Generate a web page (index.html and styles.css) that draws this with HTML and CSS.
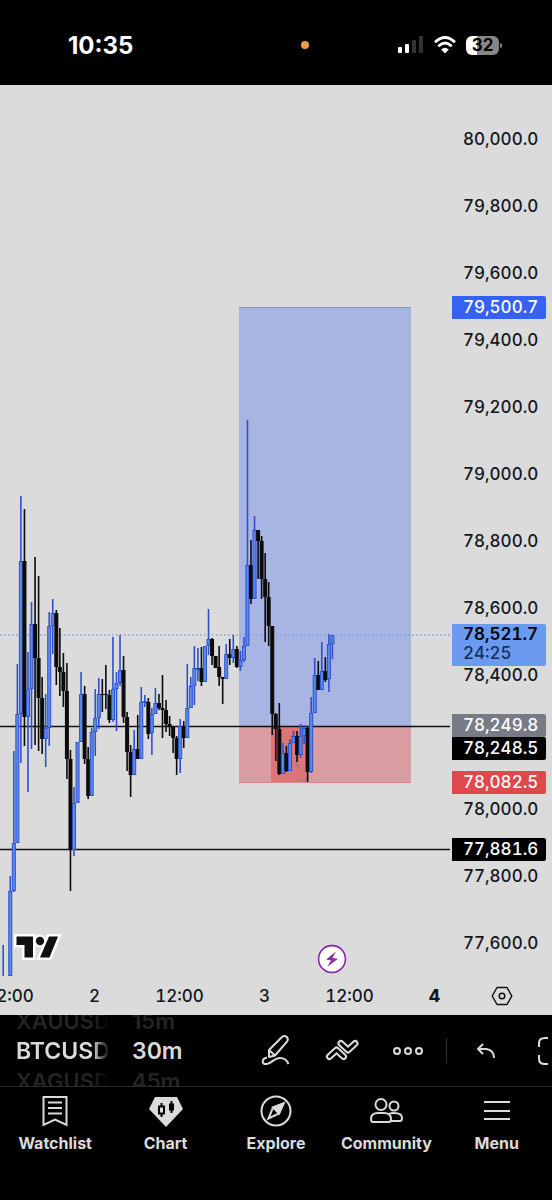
FILE: index.html
```html
<!DOCTYPE html>
<html lang="en">
<head>
  <meta charset="utf-8">
  <meta name="viewport" content="width=device-width, initial-scale=1">
  <title>BTCUSD 30m</title>
  <link rel="stylesheet" href="styles.css">
</head>

<body>

<!-- status bar -->
<header class="status">
  <span class="clock">10:35</span>
  <span class="mic"></span>
  <div class="signals">
    <svg width="26" height="18" viewBox="0 0 26 18">
      <rect x="0" y="11" width="4" height="6" rx="1" fill="#fff"/>
      <rect x="7" y="8" width="4" height="9" rx="1" fill="#fff"/>
      <rect x="14" y="4" width="4" height="13" rx="1" fill="#333"/>
      <rect x="21" y="0" width="4" height="17" rx="1" fill="#333"/>
    </svg>
    <svg width="22" height="18" viewBox="0 0 22 18" fill="none" stroke="#fff" stroke-width="2.8">
      <path d="M1 6.2Q11-3.2 21 6.2"/>
      <path d="M4.3 10.2Q11 3.8 17.7 10.2"/>
      <path d="M7.2 13.6Q11 10 14.8 13.6L11 17.4z" fill="#fff" stroke="none"/>
    </svg>
    <div class="battery"><span>32</span></div>
  </div>
</header>

<!-- chart -->
<main class="chart">
  <div class="plot">
    <svg id="candles" viewBox="0 85 451 891" preserveAspectRatio="xMinYMin slice">
      <rect x="239" y="307" width="172" height="419" fill="#a8b4e2"/>
      <rect x="239" y="726" width="172" height="57" fill="#d99da1"/>
      <rect x="271" y="726" width="37" height="57" fill="#dc7478"/>
      <path d="M239 307.500H411" stroke="#7f93dc"/>
      <path d="M239 782.500H411" stroke="#d58a90"/>
      <path d="M0 726.500H450M0 849.500H450" stroke="#111" stroke-width="1.500"/>
      <path d="M0 635H451" stroke="#7f9fe0" stroke-width="1.500" stroke-dasharray="1.500 2.500"/>
      <path d="M296 763l4 6M298 780l6 1 4-4" stroke="#8d7b7b" fill="none"/>
    </svg>
    <svg class="tv" width="50" height="28" viewBox="0 0 50 28">
      <g fill="#fff" stroke="#fff" stroke-width="5">
        <path d="M3.500 3.500h16.500v21h-8.500V12h-8zM36 3.500h9l-8.500 21H27z"/>
        <circle cx="27" cy="8" r="4"/>
      </g>
      <g fill="#111">
        <path d="M3.500 3.500h16.500v21h-8.500V12h-8zM36 3.500h9l-8.500 21H27z"/>
        <circle cx="27" cy="8" r="4.200"/>
      </g>
    </svg>
    <svg class="flash" width="30" height="30" viewBox="0 0 30 30">
      <circle cx="15" cy="15" r="15" fill="#fff"/>
      <circle cx="15" cy="15" r="13.500" fill="none" stroke="#8a2fa8" stroke-width="1.800"/>
      <path d="M19 7.500L9 15.500l5 .8-3.500 6.500 10.500-8-5.500-.8z" fill="#8a2fa8"/>
    </svg>
  </div>

  <div class="prices">
    <ul class="ticks">
      <li>80,000.0</li>
      <li>79,800.0</li>
      <li>79,600.0</li>
      <li>79,400.0</li>
      <li>79,200.0</li>
      <li>79,000.0</li>
      <li>78,800.0</li>
      <li>78,600.0</li>
      <li>78,400.0</li>
      <li></li>
      <li>78,000.0</li>
      <li>77,800.0</li>
      <li>77,600.0</li>
    </ul>
    <span class="tag target">79,500.7</span>
    <span class="tag last">78,521.7<small>24:25</small></span>
    <span class="tag entry">78,249.8</span>
    <span class="tag line-a">78,248.5</span>
    <span class="tag stop">78,082.5</span>
    <span class="tag line-b">77,881.6</span>
  </div>

  <div class="times">
    <span>12:00</span>
    <span>2</span>
    <span>12:00</span>
    <span>3</span>
    <span>12:00</span>
    <span><b>4</b></span>
  </div>
  <button class="gear" aria-label="Chart settings">
    <svg width="22" height="20" viewBox="0 0 22 20" fill="none" stroke="#111" stroke-width="1.500">
      <path d="M6 1.500h10l4.800 8.500-4.800 8.500H6L1.200 10z" stroke-linejoin="round"/>
      <circle cx="11" cy="10" r="2.800"/>
    </svg>
  </button>
</main>

<!-- toolbar -->
<section class="tools">
  <div class="wheel symbol">
    <span>XAUUSD</span>
    <button>BTCUSD</button>
    <span>XAGUSD</span>
  </div>
  <div class="wheel interval">
    <span>15m</span>
    <button>30m</button>
    <span>45m</span>
  </div>
  <div class="icons">
    <button aria-label="Draw">
      <svg width="32" height="32" viewBox="0 0 32 32">
        <path d="M9 15L22 2q2.500-2 4.800 0 2 2.400 0 4.800L15 20.500 9 22zM9 15l6 5.500"/>
        <path d="M7 22.500q-4.300 1-4.300 4t4 2.500C11 29 14 23 20 23q6 0 8.500 6"/>
      </svg>
    </button>
    <button aria-label="Indicators">
      <svg class="zigzag" width="34" height="32" viewBox="0 0 34 32">
        <path class="outer" d="M4.500 21.500l7-6.500 7 6.500"/>
        <path class="inner" d="M4.500 21.500l7-6.500 7 6.500"/>
        <path class="outer" d="M16 8.500l7 6.500 7-6.500"/>
        <path class="inner" d="M16 8.500l7 6.500 7-6.500"/>
      </svg>
    </button>
    <button aria-label="More">
      <svg width="32" height="32" viewBox="0 0 32 32">
        <circle cx="5" cy="16" r="3"/><circle cx="16" cy="16" r="3"/><circle cx="27" cy="16" r="3"/>
      </svg>
    </button>
    <i class="divider"></i>
    <button aria-label="Undo">
      <svg width="20" height="32" viewBox="0 0 20 32">
        <path d="M7 9l-5 5 5 5M2 14h8q8 1 8 9"/>
      </svg>
    </button>
    <button class="full" aria-label="Fullscreen">
      <svg width="28" height="32" viewBox="0 0 28 32">
        <path d="M10 3H7Q1 3 1 8v4M1 20v4q0 5 6 5h3M18 3h3q6 0 6 5v4M27 20v4q0 5-6 5h-3"/>
      </svg>
    </button>
  </div>
</section>

<!-- bottom tabs -->
<nav class="tabs">
  <a href="#watchlist">
    <svg width="34" height="34" viewBox="0 0 34 34">
      <path d="M5.500 3h23v28L17 25.500 5.500 31zM10 8.500h14M10 14h14M10 19.500h14"/>
    </svg>
    Watchlist
  </a>
  <a href="#chart">
    <svg width="34" height="34" viewBox="0 0 34 34">
      <path d="M6 3h22l6 12-17 18L0 15z" fill="#dbdbdb" stroke="none"/>
      <path d="M12.500 9v3M12.500 20v3M10 12.500h5v7h-5z" stroke="#000"/>
      <path d="M22.500 7v12" stroke="#000"/>
      <path d="M20 9.500h5v7h-5z" fill="#000" stroke="none"/>
    </svg>
    Chart
  </a>
  <a href="#explore">
    <svg width="34" height="34" viewBox="0 0 34 34">
      <circle cx="17" cy="17" r="14.500"/>
      <path d="M24.500 9.500L14 13.500 9.500 24.500 20 19.500z"/>
      <path d="M24.500 9.500L14 13.500l6 6z" fill="#dbdbdb"/>
    </svg>
    Explore
  </a>
  <a href="#community">
    <svg width="34" height="34" viewBox="0 0 34 34">
      <circle cx="12" cy="10.500" r="5.500"/>
      <circle cx="25" cy="12" r="4.500"/>
      <path d="M2 25q0-6 7-6h6q7 0 7 6 0 3-2 3H4q-2 0-2-3zM20 20q2-1 5-1 8 0 8 5 0 3-2 3h-9"/>
    </svg>
    Community
  </a>
  <a href="#menu">
    <svg width="34" height="34" viewBox="0 0 34 34">
      <path d="M4 8h26M4 17h26M4 25h26"/>
    </svg>
    Menu
  </a>
</nav>

<script src="candles.js"></script>

</body>
</html>
```
FILE: styles.css
```css
* {
  box-sizing: border-box;
}
body {
  margin: 0;
  min-height: 100vh;
  display: flex;
  flex-direction: column;
  background: #000;
  color: #dbdbdb;
  font-family: Inter, "Liberation Sans", sans-serif;
  overflow-x: hidden;
}
button {
  padding: 0;
  border: none;
  background: none;
  color: inherit;
  font: inherit;
}
svg {
  display: block;
}

/* status bar */
.status {
  height: 85px;
  padding: 5px 50px 0 68px;
  display: flex;
  align-items: center;
  color: #fff;
}
.clock {
  width: 233px;
  font-size: 24px;
  font-weight: 700;
}
.mic {
  width: 8px;
  height: 8px;
  border-radius: 50%;
  background: #ef9a4c;
}
.signals {
  margin-left: auto;
  display: flex;
  align-items: center;
  gap: 10px;
}
.battery {
  position: relative;
  width: 33px;
  height: 19px;
  margin-right: 3px;
  border-radius: 6px;
  background: linear-gradient(90deg, #fff 11px, #868686 11px);
  color: #000;
  font-size: 17px;
  font-weight: 700;
  line-height: 19px;
  text-align: center;
}
.battery::after {
  content: "";
  position: absolute;
  left: 34px;
  top: 7px;
  width: 2px;
  height: 5px;
  border-radius: 0 2px 2px 0;
  background: #868686;
}

/* chart */
.chart {
  display: grid;
  grid-template-columns: 1fr 101px;
  grid-template-rows: 891px 39px;
  background: #dbdbdb;
  color: #131722;
  font-size: 17px;
  font-weight: 500;
  font-variant-numeric: tabular-nums;
}
.plot {
  position: relative;
  overflow: hidden;
}
#candles {
  width: 100%;
  height: 100%;
}
.tv {
  position: absolute;
  left: 13px;
  bottom: 15px;
}
.flash {
  position: absolute;
  left: 317px;
  bottom: 2px;
}
.prices {
  position: relative;
}
.ticks {
  margin: 0;
  padding: 21px 0 0 12px;
  list-style: none;
}
.ticks li {
  height: 67px;
  line-height: 67px;
}
.tag {
  position: absolute;
  left: 1px;
  right: 6px;
  padding-left: 11px;
  border-radius: 0 2px 2px 0;
  color: #fff;
  line-height: 23px;
}
.tag small {
  display: block;
  font-size: 17px;
  line-height: 17px;
  color: #16305c;
}
.target {
  top: 211px;
  background: #3561f4;
}
.last {
  top: 539px;
  padding-bottom: 4px;
  background: #6b9bf0;
  color: #000;
  font-weight: 600;
  line-height: 21px;
}
.last small {
  font-weight: 500;
}
.entry {
  top: 629px;
  background: #787b86;
}
.line-a {
  top: 652px;
  background: #000;
}
.stop {
  top: 686px;
  background: #df484c;
}
.line-b {
  top: 753px;
  background: #000;
}
.times {
  display: flex;
  overflow: hidden;
  line-height: 41px;
}
.times span {
  flex: 0 0 85px;
  text-align: center;
}
.times span:first-child {
  margin-left: -33px;
}
.times b {
  font-weight: 800;
}
.gear {
  display: flex;
  align-items: center;
  padding-left: 40px;
}

/* toolbar */
.tools {
  height: 71px;
  display: flex;
  padding-left: 16px;
  overflow: hidden;
}
.wheel {
  display: flex;
  flex-direction: column;
  justify-content: center;
  align-items: flex-start;
  font-size: 23px;
  font-weight: 600;
  line-height: 30px;
}
.wheel span {
  font-size: 22px;
  color: #242424;
}
.symbol {
  width: 92px;
  overflow: hidden;
  -webkit-mask-image: linear-gradient(90deg, #000 76px, transparent 94px);
  mask-image: linear-gradient(90deg, #000 76px, transparent 94px);
}
.interval {
  margin-left: 24px;
}
.icons {
  flex: 1;
  display: flex;
  align-items: center;
  justify-content: flex-end;
}
.icons svg,
.tabs svg {
  fill: none;
  stroke: #dbdbdb;
  stroke-width: 2;
  stroke-linejoin: round;
}
.icons button {
  margin-right: 33px;
}
.zigzag path {
  stroke-linecap: round;
}
.zigzag .outer {
  stroke-width: 7;
}
.zigzag .inner {
  stroke: #000;
  stroke-width: 3;
}
.divider {
  width: 1px;
  height: 25px;
  margin-left: -11px;
  margin-right: 29px;
  background: #333;
}
.icons .full {
  margin-left: 9px;
  margin-right: -14px;
}

/* bottom tabs */
.tabs {
  flex: 1;
  display: grid;
  grid-template-columns: repeat(5, 1fr);
  border-top: 1px solid #2b2b2b;
}
.tabs svg {
  stroke-linejoin: miter;
}
.tabs a {
  display: flex;
  flex-direction: column;
  align-items: center;
  gap: 4px;
  padding-top: 7px;
  color: #dbdbdb;
  font-size: 16px;
  font-weight: 700;
  line-height: 22px;
  text-decoration: none;
}
```
FILE: candles.js
```js
// direction, high, body top, body bottom, low (chart units), one entry per 30m bar
var bars = [
  ['u', 945, 976, 976, 976], null, ['u', 876, 891, 976, 976], ['u', 751, 843, 891, 892],
  ['u', 664, 714, 843, 843], ['u', 496, 561, 714, 763], ['d', 509, 561, 717, 746], ['u', 652, 689, 717, 792],
  ['u', 602, 624, 689, 749], ['d', 557, 624, 658, 745], ['d', 576, 658, 698, 751], ['d', 677, 698, 739, 754],
  ['u', 694, 728, 739, 767], ['u', 612, 626, 728, 746], ['u', 599, 613, 626, 654], ['d', 610, 613, 667, 685],
  ['d', 628, 667, 672, 696], ['d', 653, 672, 691, 707], ['d', 663, 691, 759, 779], ['d', 750, 759, 850, 891],
  ['u', 787, 803, 850, 856], ['u', 742, 742, 803, 803], ['u', 672, 694, 742, 742], ['d', 686, 694, 759, 764],
  ['d', 747, 759, 796, 799], ['u', 728, 732, 796, 796], ['u', 689, 718, 732, 756], ['u', 678, 694, 718, 729],
  ['d', 679, 694, 695, 712], ['d', 665, 694, 695, 709], ['d', 690, 695, 720, 723], ['u', 637, 689, 720, 722],
  ['u', 672, 683, 689, 731], ['u', 635, 670, 683, 686], ['d', 656, 670, 717, 723], ['d', 712, 717, 752, 771],
  ['d', 745, 752, 775, 797], ['u', 730, 749, 775, 775], ['d', 715, 749, 759, 759], ['u', 687, 702, 759, 759],
  ['u', 695, 701, 703, 707], ['d', 698, 702, 734, 739], ['u', 708, 714, 733, 755], ['u', 688, 703, 714, 714],
  ['d', 694, 703, 708, 710], ['d', 675, 708, 710, 738], ['d', 700, 710, 724, 732], ['d', 716, 724, 727, 736],
  ['d', 726, 727, 738, 753], ['d', 736, 738, 759, 775], ['u', 719, 726, 759, 773], ['d', 721, 726, 738, 748],
  ['u', 664, 708, 738, 738], ['u', 677, 686, 708, 708], ['u', 646, 668, 686, 705], ['u', 648, 668, 669, 681],
  ['d', 647, 668, 682, 686], ['u', 646, 646, 682, 682], ['u', 609, 639, 646, 655], ['d', 638, 639, 656, 665],
  ['d', 656, 656, 668, 668], ['d', 646, 667, 677, 686], ['d', 677, 677, 679, 704], ['u', 644, 654, 679, 679],
  ['d', 639, 654, 658, 665], ['u', 635, 649, 658, 663], ['d', 646, 649, 667, 668], ['u', 651, 660, 667, 671],
  ['u', 637, 646, 660, 662], ['u', 420, 565, 646, 646], ['d', 540, 565, 599, 604], ['u', 516, 530, 599, 599],
  ['d', 530, 530, 541, 579], ['d', 536, 541, 579, 599], ['d', 553, 579, 597, 642], ['d', 582, 597, 626, 646],
  ['d', 626, 626, 714, 735], ['d', 713, 714, 729, 761], ['d', 703, 729, 774, 775], ['u', 743, 753, 774, 774],
  ['d', 746, 753, 771, 772], ['u', 739, 743, 771, 771], ['u', 731, 736, 743, 743], ['d', 731, 736, 755, 762],
  ['u', 724, 736, 755, 758], ['u', 725, 728, 736, 744], ['d', 727, 728, 772, 782], ['u', 697, 713, 772, 773],
  ['u', 658, 675, 713, 713], ['d', 661, 675, 690, 690], ['u', 642, 671, 690, 690], ['d', 657, 671, 680, 682],
  ['u', 634, 644, 679, 692], ['u', 635, 635, 644, 659]
];

var svg = document.getElementById('candles');
var step = 3.54;

function rect(x, y, w, h, fill, stroke) {
  var r = document.createElementNS('http://www.w3.org/2000/svg', 'rect');
  r.setAttribute('x', x);
  r.setAttribute('y', y);
  r.setAttribute('width', w);
  r.setAttribute('height', Math.max(h, 1));
  r.setAttribute('fill', fill);
  if (stroke) r.setAttribute('stroke', stroke);
  svg.appendChild(r);
}

bars.forEach(function (bar, i) {
  if (!bar) return;
  var x = 3.2 + i * step;
  var up = bar[0] == 'u';
  rect(x - 0.8, bar[1], 1.6, bar[4] - bar[1], up ? '#2f50cf' : '#0c0c0c');
  if (bar[3] == bar[2]) return;
  if (up)
    rect(x - 1.5, bar[2] + 0.5, 3, bar[3] - bar[2] - 1, '#5b8bea', '#2f50cf');
  else
    rect(x - 2, bar[2], 4, bar[3] - bar[2], '#0c0c0c');
});
```
